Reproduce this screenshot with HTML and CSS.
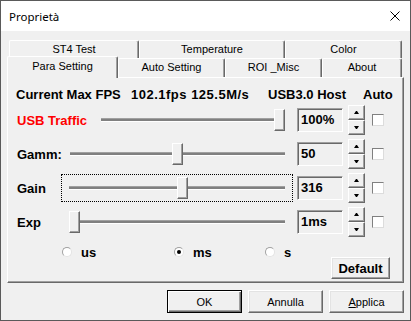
FILE: index.html
```html
<!DOCTYPE html>
<html lang="it">
<head>
    <meta charset="UTF-8">
    <meta name="viewport" content="width=device-width, initial-scale=1.0">
    <title>Proprietà</title>
    <link rel="stylesheet" href="styles.css">
</head>
<body>
    <div class="window">
        <div class="titlebar">
            <span class="title">Proprietà</span>
            <svg class="close" width="10" height="10" viewBox="0 0 10 10">
                <path d="M0.5 0.5 L9.5 9.5 M9.5 0.5 L0.5 9.5" stroke="#000" stroke-width="1" fill="none"/>
            </svg>
        </div>

        <div class="dialog">
            <!-- two rows of tabs, the front one holds the selected tab -->
            <div class="tabs">
                <div class="tab-row back">
                    <div class="tab w-st4">ST4 Test</div>
                    <div class="tab w-temp">Temperature</div>
                    <div class="tab w-color">Color</div>
                </div>
                <div class="tab-row front">
                    <div class="tab w-para active">Para Setting</div>
                    <div class="tab w-auto">Auto Setting</div>
                    <div class="tab w-roi">ROI _Misc</div>
                    <div class="tab w-about">About</div>
                </div>
            </div>

            <div class="pane">
                <div class="info">
                    <span>Current Max FPS</span>
                    <span class="nums">102.1fps 125.5M/s</span>
                    <span>USB3.0 Host</span>
                    <span>Auto</span>
                </div>

                <div class="rows">
                    <div class="row">
                        <span class="label wide red">USB Traffic</span>
                        <div class="slider"><div class="track"><div class="thumb" style="--v: 1"></div></div></div>
                        <div class="edit">100%</div>
                        <div class="spin">
                            <div class="spin-btn"><span class="arrow up"></span></div>
                            <div class="spin-btn"><span class="arrow down"></span></div>
                        </div>
                        <span class="check"></span>
                    </div>
                    <div class="row">
                        <span class="label">Gamm:</span>
                        <div class="slider"><div class="track"><div class="thumb" style="--v: 0.5"></div></div></div>
                        <div class="edit">50</div>
                        <div class="spin">
                            <div class="spin-btn"><span class="arrow up"></span></div>
                            <div class="spin-btn"><span class="arrow down"></span></div>
                        </div>
                        <span class="check"></span>
                    </div>
                    <div class="row">
                        <span class="label">Gain</span>
                        <div class="slider focus"><div class="track"><div class="thumb" style="--v: 0.527"></div></div></div>
                        <div class="edit">316</div>
                        <div class="spin">
                            <div class="spin-btn"><span class="arrow up"></span></div>
                            <div class="spin-btn"><span class="arrow down"></span></div>
                        </div>
                        <span class="check"></span>
                    </div>
                    <div class="row">
                        <span class="label">Exp</span>
                        <div class="slider"><div class="track"><div class="thumb" style="--v: 0"></div></div></div>
                        <div class="edit">1ms</div>
                        <div class="spin">
                            <div class="spin-btn"><span class="arrow up"></span></div>
                            <div class="spin-btn"><span class="arrow down"></span></div>
                        </div>
                        <span class="check"></span>
                    </div>
                </div>

                <div class="radios">
                    <label class="radio r1"><span class="dot"></span>us</label>
                    <label class="radio r2"><span class="dot on"></span>ms</label>
                    <label class="radio"><span class="dot"></span>s</label>
                </div>

                <div class="default-row">
                    <button type="button" class="btn bold">Default</button>
                </div>
            </div>

            <div class="buttons">
                <button type="button" class="btn default">OK</button>
                <button type="button" class="btn">Annulla</button>
                <button type="button" class="btn"><u>A</u>pplica</button>
            </div>
        </div>
    </div>
</body>
</html>
```

FILE: styles.css
```css
body {
    margin: 0;
    background: #f0f0f0;
    font-family: "Liberation Sans", Arial, sans-serif;
    font-size: 11px;
    color: #000;
}
.window {
    width: 411px;
    height: 321px;
    box-sizing: border-box;
    border: 1px solid #5a5a5a;
    background: #f0f0f0;
}
.titlebar {
    height: 30px;
    background: #fff;
    display: flex;
    align-items: center;
    justify-content: space-between;
    padding: 0 10px 0 8px;
}
.title {
    font-family: "Noto Sans", sans-serif;
    font-size: 11.5px;
}
.dialog {
    padding: 9px 6px 0;
}

/* tabs */
.tab-row {
    display: flex;
    align-items: flex-start;
}
.tab-row.back {
    height: 18px;
    padding-left: 2px;
}
.tab-row.front {
    height: 19px;
}
.tab {
    box-sizing: border-box;
    height: 100%;
    border: 1px solid;
    border-color: #fff #696969 transparent #fff;
    border-bottom: none;
    border-radius: 2px 2px 0 0;
    box-shadow: inset -1px 0 0 #a0a0a0;
    background: #f0f0f0;
    text-align: center;
    line-height: 16px;
    white-space: nowrap;
}
.tab.active {
    height: 22px;
    margin-top: -2px;
    line-height: 18px;
    position: relative;
    z-index: 1;
}
.w-st4 { width: 130px; }
.w-temp { width: 146px; }
.w-color { width: 117px; }
.w-para { width: 111px; }
.w-auto { width: 107px; }
.w-roi { width: 97px; }
.w-about { width: 80px; }

/* tab page */
.pane {
    border: 1px solid;
    border-color: #fff #696969 #696969 #fff;
    box-shadow: inset -1px -1px 0 #a0a0a0;
    padding: 9px 0 3px 9px;
    font-weight: bold;
    font-size: 13px;
}
.info {
    display: grid;
    grid-template-columns: 115px 137px 95px auto;
    height: 16px;
    line-height: 16px;
    margin-left: -1px;
    white-space: nowrap;
}
.info .nums {
    letter-spacing: 0.5px;
}
.rows {
    display: flex;
    flex-direction: column;
    gap: 4px;
    margin-top: 2px;
}
.row {
    display: flex;
    align-items: center;
    width: 367px;
    height: 30px;
}
.label {
    flex: 0 0 44px;
    white-space: nowrap;
}
.label.wide { flex-basis: 76px; }
.label.red { color: #f00; }

.slider {
    flex: 1;
    height: 28px;
    box-sizing: border-box;
    border: 1px solid transparent;
    padding: 0 7px;
    display: flex;
    align-items: center;
}
.slider.focus {
    border: 1px dotted #000;
}
.track {
    flex: 1;
    height: 4px;
    box-sizing: border-box;
    position: relative;
    background: #808080;
    border-top: 1px solid #a0a0a0;
    border-bottom: 1px solid #fff;
}
.thumb {
    position: absolute;
    top: -10px;
    left: calc((100% - 11px) * var(--v));
    width: 11px;
    height: 22px;
    box-sizing: border-box;
    background: #f0f0f0;
    border: 1px solid;
    border-color: #fff #696969 #696969 #fff;
    box-shadow: inset -1px -1px 0 #a0a0a0;
}
.edit {
    flex: 0 0 46px;
    height: 24px;
    box-sizing: border-box;
    margin-left: 4px;
    padding-left: 3px;
    border: 1px solid;
    border-color: #a0a0a0 #fff #fff #a0a0a0;
    box-shadow: inset 1px 1px 0 #696969;
    line-height: 22px;
}
.spin {
    flex: 0 0 17px;
    height: 30px;
    margin-left: 5px;
    display: flex;
    flex-direction: column;
}
.spin-btn {
    flex: 1;
    box-sizing: border-box;
    border: 1px solid;
    border-color: #fff #696969 #696969 #fff;
    box-shadow: inset -1px -1px 0 #a0a0a0;
    display: flex;
    align-items: center;
    justify-content: center;
}
.arrow {
    width: 1px;
    height: 0;
    border-left: 2px solid transparent;
    border-right: 2px solid transparent;
}
.arrow.up { border-bottom: 3px solid #000; }
.arrow.down { border-top: 3px solid #000; }
.check {
    flex: 0 0 12px;
    height: 12px;
    box-sizing: border-box;
    margin-left: 7px;
    background: #fff;
    border: 1px solid;
    border-color: #808080 #dcdcdc #dcdcdc #808080;
}

/* units */
.radios {
    display: flex;
    align-items: center;
    height: 14px;
    margin-top: 8px;
    padding-left: 45px;
}
.radio {
    display: flex;
    align-items: center;
    gap: 9px;
}
.radio.r1 { width: 112px; }
.radio.r2 { width: 91px; }
.dot {
    width: 10px;
    height: 10px;
    box-sizing: border-box;
    border-radius: 50%;
    border: 1px solid;
    border-color: #a0a0a0 #e3e3e3 #e3e3e3 #a0a0a0;
    background: #fff;
    display: flex;
    align-items: center;
    justify-content: center;
}
.dot.on::after {
    content: "";
    width: 4px;
    height: 4px;
    border-radius: 50%;
    background: #000;
}
.default-row {
    display: flex;
    justify-content: flex-end;
    margin-top: -2px;
    padding-right: 13px;
}

/* buttons */
.btn {
    width: 75px;
    height: 23px;
    box-sizing: border-box;
    padding: 0;
    font-family: "Liberation Sans", Arial, sans-serif;
    font-size: 11px;
    color: #000;
    background: #f0f0f0;
    border: 1px solid;
    border-color: #fff #696969 #696969 #fff;
    box-shadow: inset -1px -1px 0 #a0a0a0, inset 1px 1px 0 #e3e3e3;
}
.btn.default {
    border-color: #000;
    box-shadow: inset 1px 1px 0 #fff, inset -1px -1px 0 #696969, inset -2px -2px 0 #a0a0a0;
}
.btn.bold {
    width: 59px;
    height: 22px;
    font-weight: bold;
    font-size: 13px;
}
.buttons {
    display: flex;
    justify-content: flex-end;
    gap: 6px;
    margin-top: 7px;
}
```
